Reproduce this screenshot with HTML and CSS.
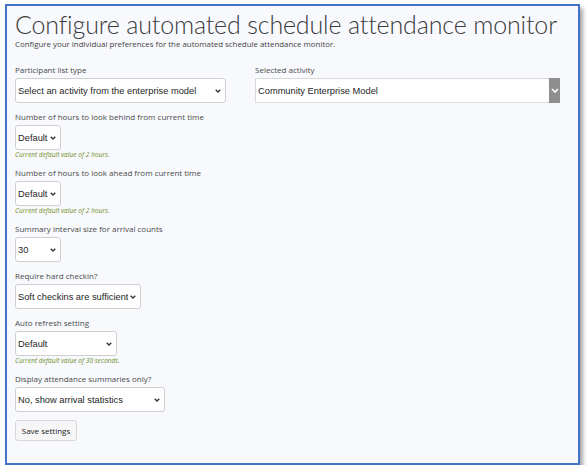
FILE: index.html
```html
<!DOCTYPE html>
<html lang="en">
<head>
    <meta charset="UTF-8">
    <meta name="viewport" content="width=device-width, initial-scale=1.0">
    <title>Configure automated schedule attendance monitor</title>
    <link rel="stylesheet" href="styles.css">
</head>
<body>
<main class="panel">
    <h1 class="title">Configure automated schedule attendance monitor</h1>
    <p class="intro">Configure your individual preferences for the automated schedule attendance monitor.</p>

    <form class="settings" onsubmit="return false;">
        <div class="top-row">
            <div class="field">
                <label for="listType">Participant list type</label>
                <div class="pick w-list">
                    <select id="listType">
                        <option>Select an activity from the enterprise model</option>
                    </select>
                    <svg class="chev" width="6" height="4" viewBox="0 0 6 4"><path d="M0.7 0.7L3 3L5.3 0.7" fill="none" stroke="#333" stroke-width="1.3"/></svg>
                </div>
            </div>
            <div class="field">
                <label for="activity">Selected activity</label>
                <div class="activity">
                    <select id="activity">
                        <option>Community Enterprise Model</option>
                    </select>
                    <span class="activity-btn">
                        <svg width="8" height="5" viewBox="0 0 8 5"><path d="M1 1L4 4L7 1" fill="none" stroke="#fff" stroke-width="1.6"/></svg>
                    </span>
                </div>
            </div>
        </div>

        <div class="field">
            <label for="behind">Number of hours to look behind from current time</label>
            <div class="pick w-small">
                <select id="behind"><option>Default</option></select>
                <svg class="chev" width="6" height="4" viewBox="0 0 6 4"><path d="M0.7 0.7L3 3L5.3 0.7" fill="none" stroke="#333" stroke-width="1.3"/></svg>
            </div>
            <p class="hint">Current default value of 2 hours.</p>
        </div>

        <div class="field">
            <label for="ahead">Number of hours to look ahead from current time</label>
            <div class="pick w-small">
                <select id="ahead"><option>Default</option></select>
                <svg class="chev" width="6" height="4" viewBox="0 0 6 4"><path d="M0.7 0.7L3 3L5.3 0.7" fill="none" stroke="#333" stroke-width="1.3"/></svg>
            </div>
            <p class="hint">Current default value of 2 hours.</p>
        </div>

        <div class="field">
            <label for="interval">Summary interval size for arrival counts</label>
            <div class="pick w-small">
                <select id="interval"><option>30</option></select>
                <svg class="chev" width="6" height="4" viewBox="0 0 6 4"><path d="M0.7 0.7L3 3L5.3 0.7" fill="none" stroke="#333" stroke-width="1.3"/></svg>
            </div>
        </div>

        <div class="field">
            <label for="checkin">Require hard checkin?</label>
            <div class="pick w-checkin">
                <select id="checkin"><option>Soft checkins are sufficient</option></select>
                <svg class="chev" width="6" height="4" viewBox="0 0 6 4"><path d="M0.7 0.7L3 3L5.3 0.7" fill="none" stroke="#333" stroke-width="1.3"/></svg>
            </div>
        </div>

        <div class="field">
            <label for="refresh">Auto refresh setting</label>
            <div class="pick w-refresh">
                <select id="refresh"><option>Default</option></select>
                <svg class="chev" width="6" height="4" viewBox="0 0 6 4"><path d="M0.7 0.7L3 3L5.3 0.7" fill="none" stroke="#333" stroke-width="1.3"/></svg>
            </div>
            <p class="hint">Current default value of 30 seconds.</p>
        </div>

        <div class="field">
            <label for="summaries">Display attendance summaries only?</label>
            <div class="pick w-summary">
                <select id="summaries"><option>No, show arrival statistics</option></select>
                <svg class="chev" width="6" height="4" viewBox="0 0 6 4"><path d="M0.7 0.7L3 3L5.3 0.7" fill="none" stroke="#333" stroke-width="1.3"/></svg>
            </div>
        </div>

        <button type="submit" class="save">Save settings</button>
    </form>
</main>
</body>
</html>
```

FILE: styles.css
```css
body {
    margin: 0;
    background: #fff;
    font-family: "Open Sans", "Noto Sans", sans-serif;
    color: #444;
}

.panel {
    box-sizing: border-box;
    width: 575px;
    height: 461px;
    margin: 4px 0 0 5px;
    padding: 5px 18px 0 8px;
    background: #f7f9fd;
    border: 2px solid #4472c4;
    box-shadow: 3px 4px 4px rgba(0, 0, 0, 0.35);
}

.title {
    margin: 0;
    font-family: Lato, "Open Sans", sans-serif;
    font-weight: 300;
    font-size: 25px;
    letter-spacing: -0.15px;
    line-height: 27px;
    color: #3b3b3b;
    white-space: nowrap;
}

.intro {
    margin: 0;
    font-size: 7.9px;
    line-height: 12px;
    color: #444;
}

.settings {
    margin-top: 14px;
}

.top-row {
    display: grid;
    grid-template-columns: 211px 305px;
    column-gap: 29px;
}

.field {
    margin-bottom: 8px;
}

.field label {
    display: block;
    font-size: 8px;
    line-height: 12px;
    margin-bottom: 2px;
    color: #4a4a4a;
}

.pick {
    position: relative;
}

.pick select,
.activity select {
    display: block;
    box-sizing: border-box;
    width: 100%;
    height: 25px;
    margin: 0;
    padding: 0 12px 0 2px;
    appearance: none;
    -webkit-appearance: none;
    background: #fff;
    border: 1px solid #cfcfcf;
    border-radius: 3px;
    font-family: "Liberation Sans", Arial, sans-serif;
    font-size: 9.3px;
    color: #1e1e1e;
}

.pick .chev {
    position: absolute;
    right: 5px;
    top: 11px;
    pointer-events: none;
}

.w-list { width: 211px; }
.w-small { width: 46px; }
.w-checkin { width: 126px; }
.w-refresh { width: 102px; }
.w-summary { width: 150px; }

.activity {
    position: relative;
    width: 305px;
}

.activity select {
    border-radius: 0;
    border-color: #dadada;
}

.activity-btn {
    position: absolute;
    top: 0;
    right: 0;
    bottom: 0;
    width: 11px;
    background: #8e8e8e;
    display: flex;
    align-items: center;
    justify-content: center;
    pointer-events: none;
}

.hint {
    margin: 1px 0 0;
    font-size: 6.6px;
    line-height: 8px;
    font-style: italic;
    color: #6f8f2a;
}

.save {
    display: block;
    margin-top: 5px;
    width: 62px;
    height: 21px;
    padding: 0;
    background: #f6f6f6;
    border: 1px solid #d8d8d8;
    border-radius: 3px;
    font-family: "Open Sans", sans-serif;
    font-size: 8px;
    color: #222;
}
```
